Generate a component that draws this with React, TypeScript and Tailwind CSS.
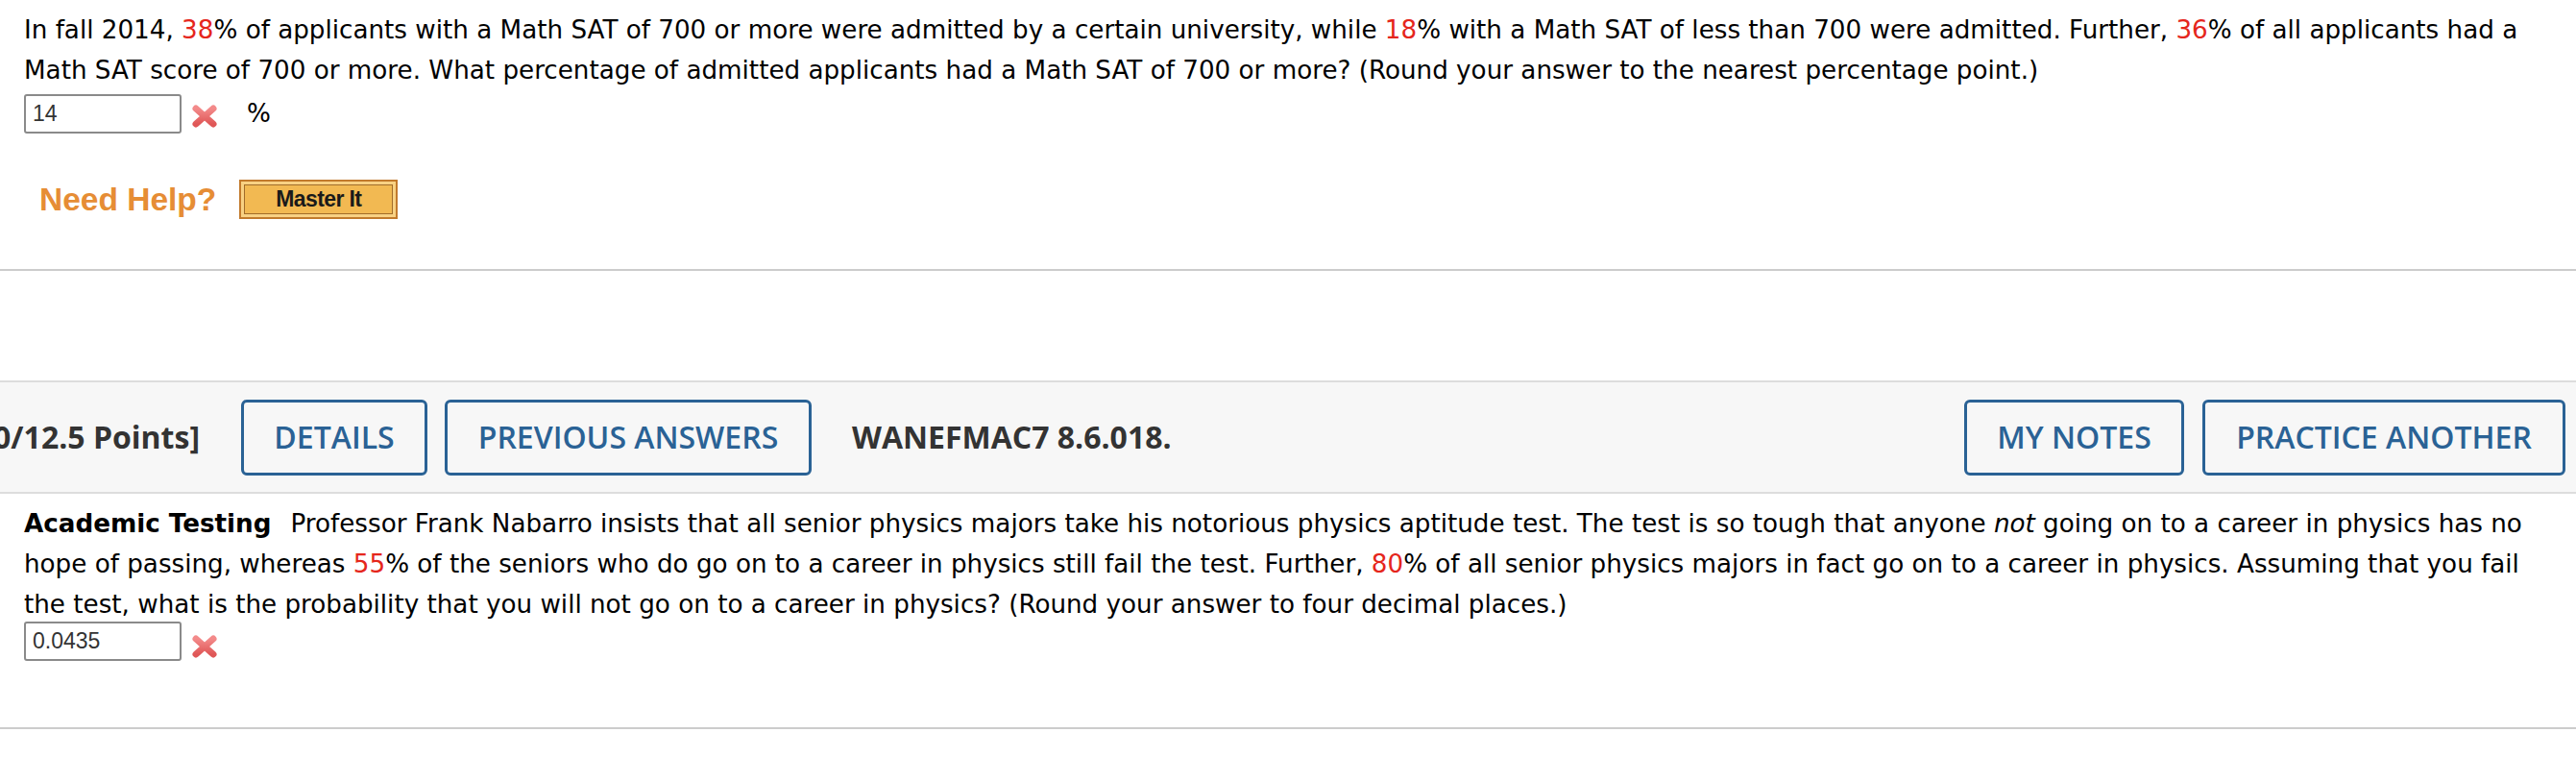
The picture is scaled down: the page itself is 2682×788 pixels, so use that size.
import type { ReactNode } from "react";

function Red({ children }: { children: ReactNode }) {
  return <span className="text-[#e5261c]">{children}</span>;
}

function WrongMark() {
  return (
    <svg width="28" height="26" viewBox="0 0 28 26" className="shrink-0">
      <defs>
        <linearGradient id="xg" x1="0" y1="0" x2="0" y2="1">
          <stop offset="0" stopColor="#f27d7d" />
          <stop offset="1" stopColor="#dc4444" />
        </linearGradient>
      </defs>
      <path
        d="M5 5 L23 21 M23 5 L5 21"
        stroke="url(#xg)"
        strokeWidth="7"
        strokeLinecap="round"
        fill="none"
        opacity="0.9"
      />
    </svg>
  );
}

function AnswerBox({ value }: { value: string }) {
  return (
    <div className="flex h-[41px] w-[164px] shrink-0 items-center rounded-[3px] border-2 border-[#8a8a8a] bg-white pl-[7px] font-['Liberation_Sans',sans-serif] text-[23px] leading-none text-[#333]">
      {value}
    </div>
  );
}

function BarButton({ width, children }: { width: string; children: ReactNode }) {
  return (
    <div
      className={`flex h-[79px] ${width} shrink-0 items-center justify-center rounded-[6px] border-[3px] border-[#2a6295] text-[32px] font-semibold text-[#2a6295]`}
    >
      {children}
    </div>
  );
}

export default function App() {
  return (
    <div className="min-h-[788px] w-full bg-white font-['DejaVu_Sans',sans-serif] text-[26.2px] leading-[42px] text-black">
      {/* first question, finished */}
      <section className="px-[25px] pt-[10px]">
        <p className="w-[2634px]">
          In fall 2014, <Red>38</Red>% of applicants with a Math SAT of 700 or more were admitted by a
          certain university, while <Red>18</Red>% with a Math SAT of less than 700 were admitted.
          Further, <Red>36</Red>% of all applicants had a Math SAT score of 700 or more. What percentage
          of admitted applicants had a Math SAT of 700 or more? (Round your answer to the nearest
          percentage point.)
        </p>
        <div className="mt-[3px] flex items-center">
          <AnswerBox value="14" />
          <div className="ml-[10px] mt-[6px]">
            <WrongMark />
          </div>
          <span className="ml-[30px]">%</span>
        </div>
        <div className="mt-[48px] flex items-center">
          <span className="ml-[16px] font-['Liberation_Sans',sans-serif] text-[33.5px] font-bold leading-none text-[#e68d35]">
            Need Help?
          </span>
          <div className="ml-[24px] h-[41px] w-[165px] border-2 border-[#c27a2c] bg-[#f8d183] p-[3px]">
            <div className="flex h-full w-full items-center justify-center border border-[#a06c2a] bg-[#f2b952] font-['Liberation_Sans',sans-serif] text-[23px] font-bold leading-none tracking-[-0.6px] text-[#1a1a1a]">
              Master It
            </div>
          </div>
        </div>
      </section>
      <div className="mt-[52px] border-t-2 border-[#cccccc]" />

      {/* question header bar */}
      <div className="mt-[114px] flex h-[118px] items-center border-y-2 border-[#dddddd] bg-[#f7f7f7] pr-[11px] font-['Open_Sans',sans-serif]">
        <div className="flex w-[208px] shrink-0 justify-end overflow-hidden whitespace-nowrap text-[32px] font-bold text-[#333]">
          [0/12.5 Points]
        </div>
        <div className="ml-[43px] flex gap-[18px]">
          <BarButton width="w-[194px]">DETAILS</BarButton>
          <BarButton width="w-[382px]">PREVIOUS ANSWERS</BarButton>
        </div>
        <span className="ml-[42px] whitespace-nowrap text-[32px] font-bold text-[#333]">WANEFMAC7 8.6.018.</span>
        <div className="ml-auto flex gap-[19px]">
          <BarButton width="w-[229px]">MY NOTES</BarButton>
          <BarButton width="w-[378px]">PRACTICE ANOTHER</BarButton>
        </div>
      </div>

      {/* second question */}
      <section className="px-[25px] pt-[10px]">
        <p className="w-[2634px] leading-[42px]">
          <span className="mr-[20px] font-bold">Academic Testing</span>
          Professor Frank Nabarro insists that all senior physics majors take his notorious physics
          aptitude test. The test is so tough that anyone <i>not</i> going on to a career in physics has
          no hope of passing, whereas <Red>55</Red>% of the seniors who do go on to a career in physics
          still fail the test. Further, <Red>80</Red>% of all senior physics majors in fact go on to a
          career in physics. Assuming that you fail the test, what is the probability that you will not
          go on to a career in physics? (Round your answer to four decimal places.)
        </p>
        <div className="-mt-[3px] flex items-center">
          <AnswerBox value="0.0435" />
          <div className="ml-[10px] mt-[10px]">
            <WrongMark />
          </div>
        </div>
      </section>
      <div className="mt-[69px] border-t-2 border-[#cccccc]" />
    </div>
  );
}
